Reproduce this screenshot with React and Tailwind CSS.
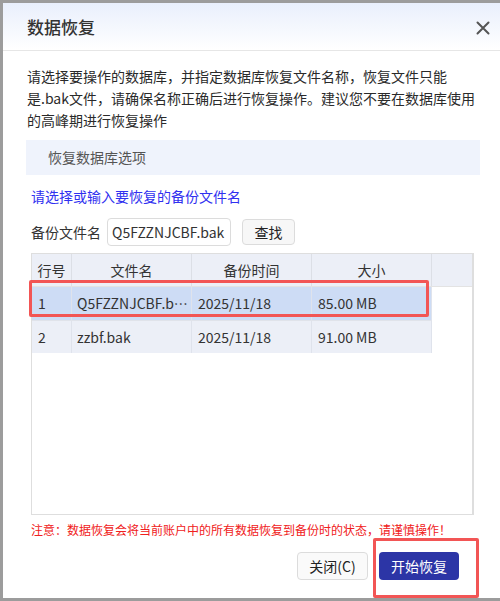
import React from "react";

const font = { fontFamily: '"Noto Sans CJK SC", "Noto Sans", sans-serif' };

const rows = [
  { no: "1", name: "Q5FZZNJCBF.bak", time: "2025/11/18", size: "85.00 MB", selected: true },
  { no: "2", name: "zzbf.bak", time: "2025/11/18", size: "91.00 MB", selected: false },
];

const App = () => {
  return (
    <div className="w-[500px] h-[601px] overflow-hidden bg-[#9c9c9c] pl-[3px] pt-[3px]" style={font}>
      <div className="relative w-[520px] h-[595px] bg-white rounded-tl-[3px] flex flex-col text-[#333]">
        {/* header */}
        <div className="h-[48px] shrink-0 flex items-center justify-between pl-[24px] pr-[34px] bg-gradient-to-b from-[#e9effc] to-white border-b border-[#e6e6e6]">
          <span className="text-[17px] font-medium text-[#333] leading-none">数据恢复</span>
          <svg width="14" height="14" viewBox="0 0 14 14" className="mr-[-1px] mt-[2px]">
            <path d="M1.5 1.5 L12.5 12.5 M12.5 1.5 L1.5 12.5" stroke="#555" strokeWidth="2" strokeLinecap="round" />
          </svg>
        </div>

        <div className="w-[497px] pl-[24px] pr-[20px]">
          <p className="text-[14px] leading-[22px] mt-[14px] text-[#2a2a2a]">
            <span className="block whitespace-nowrap">请选择要操作的数据库，并指定数据库恢复文件名称，恢复文件只能</span>
            <span className="block whitespace-nowrap">是.bak文件，请确保名称正确后进行恢复操作。建议您不要在数据库使用</span>
            <span className="block whitespace-nowrap">的高峰期进行恢复操作</span>
          </p>

          <div className="mt-[9px] h-[35px] w-[454px] -ml-[1px] bg-[#eff3fc] flex items-center pl-[22px] text-[14px] text-[#555]">
            恢复数据库选项
          </div>

          <div className="pl-[4px]">
            <div className="mt-[11px] text-[14px] leading-[20px] text-[#3030f0]">请选择或输入要恢复的备份文件名</div>

            <div className="mt-[12px] flex items-center text-[14px]">
              <span className="text-[#333]">备份文件名</span>
              <input
                readOnly
                value="Q5FZZNJCBF.bak"
                className="ml-[6px] w-[124px] h-[28px] border border-[#dcdcdc] rounded-[4px] pl-[4px] text-[14px] text-[#333] outline-none"
                style={font}
              />
              <button className="ml-[11px] w-[53px] h-[26px] border border-[#dcdcdc] rounded-[4px] bg-[#f7f7f7] text-[14px] text-[#222]">
                查找
              </button>
            </div>

            {/* table */}
            <div className="mt-[7px] w-[443px] h-[262px] border border-[#dedede] border-r-[2px] flex flex-col">
              <div className="h-[33px] bg-[#eceff7] flex text-[14px] text-[#333] border-b border-[#e3e3e3]">
                <div className="w-[40px] flex items-center justify-center border-r border-[#dcdfe6]">行号</div>
                <div className="w-[120px] flex items-center justify-center border-r border-[#dcdfe6]">文件名</div>
                <div className="w-[120px] flex items-center justify-center border-r border-[#dcdfe6]">备份时间</div>
                <div className="w-[120px] flex items-center justify-center border-r border-[#dcdfe6]">大小</div>
                <div className="flex-1"></div>
              </div>
              {rows.map((r) => (
                <div
                  key={r.no}
                  className={`h-[33px] w-[400px] flex text-[14px] text-[#333] ${r.selected ? "bg-[#cddcf5]" : "bg-[#eceff7] border-t border-[#e0e3ea]"}`}
                >
                  <div className="w-[40px] flex items-center pl-[6px] border-r border-[#dfe3ec]">{r.no}</div>
                  <div className="w-[120px] flex items-center pl-[5px] pr-[2px] border-r border-[#dfe3ec] overflow-hidden">
                    <span className="truncate">{r.name}</span>
                  </div>
                  <div className="w-[120px] flex items-center pl-[6px] border-r border-[#dfe3ec]">{r.time}</div>
                  <div className="w-[120px] flex items-center pl-[6px] border-r border-[#dfe3ec]">{r.size}</div>
                </div>
              ))}
            </div>

            <div className="mt-[6px] text-[12px] leading-[18px] text-[#f02020] whitespace-nowrap">
              注意：数据恢复会将当前账户中的所有数据恢复到备份时的状态，请谨慎操作！
            </div>
          </div>

          <div className="mt-[13px] flex justify-end pr-[21px] gap-[11px]">
            <button className="w-[71px] h-[28px] border border-[#dcdcdc] rounded-[4px] bg-[#fafafa] text-[14px] text-[#222]">
              关闭(C)
            </button>
            <button className="w-[80px] h-[28px] rounded-[4px] bg-[#2c35a6] text-[14px] text-white">开始恢复</button>
          </div>
        </div>

        {/* annotation boxes */}
        <div className="absolute left-[26px] top-[277px] w-[400px] h-[37px] border-[3px] border-[#f25555] rounded-[2px] pointer-events-none"></div>
        <div className="absolute left-[370px] top-[535px] w-[106px] h-[60px] border-[3px] border-[#f25555] rounded-[2px] pointer-events-none"></div>
      </div>
    </div>
  );
};

export default App;
